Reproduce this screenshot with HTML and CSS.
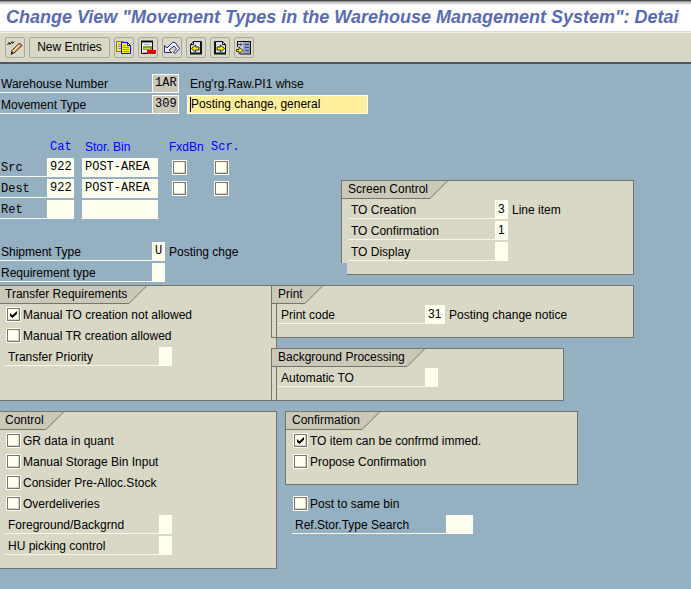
FILE: index.html
```html
<!DOCTYPE html>
<html lang="en">
<head>
<meta charset="utf-8">
<title>Change View "Movement Types in the Warehouse Management System"</title>
<link rel="stylesheet" href="styles.css">
</head>
<body>
<header>
  <h1 class="title">Change View "Movement Types in the Warehouse Management System": Detai</h1>
  <div class="toolbar" role="toolbar">
    <button class="tool" type="button" aria-label="Display/Change"><svg class="icon" viewBox="0 0 16 16">
      <path d="M.5 5l1.500-2.500L3 4.500 5 1.500l.5 2L7.500 1.500" fill="none" stroke="#222"/>
      <path d="M4.500 13.500l.5-3 7.500-7.500 2.500 2.500-8 7.500z" fill="#f9b868" stroke="#222"/>
      <path d="M6 11l6.500-6.500" stroke="#fff3d0"/><path d="M11.500 3l3 3" stroke="#c4553a"/><path d="M3.500 15l1-3.500 2 2z" fill="#111"/></svg></button>
    <button class="tool tool--text" type="button">New Entries</button>
    <button class="tool" type="button" aria-label="Copy as"><svg class="icon" viewBox="0 0 16 16">
      <path d="M.5 1.500h7v10h-7z" fill="#ffee2c" stroke="#827a30"/><path d="M2 4.500h3M2 6.500h3M2 8.500h3" stroke="#a39a3a"/>
      <path d="M5.500 2.500h6l3 3v8h-9z" fill="#ffee2c" stroke="#0000f0"/><path d="M11.500 2.500v3h3z" fill="#fff" stroke="#0000f0"/><path d="M7 5.500h3M7 7.500h6M7 9.500h6M7 11.500h6" stroke="#a39a3a"/></svg></button>
    <button class="tool" type="button" aria-label="Delete"><svg class="icon" viewBox="0 0 16 16">
      <path d="M1.500 1.500h11v12h-11z" fill="#eef2f8" stroke="#111"/><path d="M1 1.500h12" stroke="#111" stroke-width="2"/>
      <path d="M4 4.500h6M3 12.500h4" stroke="#9aa8bc"/><path d="M3 6h9v4H3z" fill="#7fa51c"/><path d="M4 8.500h6" stroke="#b9d260"/>
      <path d="M7 10h9v4H7z" fill="#e00010"/></svg></button>
    <button class="tool" type="button" aria-label="Undo"><svg class="icon" viewBox="0 0 16 16">
      <path d="M.5 5.500v7h7L5 10l5-4 2.500 3-3 3 1.500 1.500 4.500-5-4.500-6H8.500L3 8z" fill="#f2f4ff" stroke="#22228a"/></svg></button>
    <button class="tool" type="button" aria-label="Previous entry"><svg class="icon" viewBox="0 0 16 16">
      <path d="M5.500 1.500h8v12h-11v-9z" fill="#d3e3f5" stroke="#111"/><path d="M13 2v12M2 13.500h12" stroke="#111" stroke-width="2"/><path d="M5.500 1.500v3h-3z" fill="#fff" stroke="#111"/>
      <path d="M3.500 8.500l4-3.500v2h3.500v3H7.500v2z" fill="#ffee00" stroke="#333"/></svg></button>
    <button class="tool" type="button" aria-label="Next entry"><svg class="icon" viewBox="0 0 16 16">
      <path d="M2.500 1.500h8l3 3v9h-11z" fill="#d3e3f5" stroke="#111"/><path d="M3 2v12M2 13.500h12" stroke="#111" stroke-width="2"/><path d="M10.500 1.500v3h3z" fill="#fff" stroke="#111"/>
      <path d="M12.500 8.500l-4-3.500v2H5v3h3.500v2z" fill="#ffee00" stroke="#333"/></svg></button>
    <button class="tool" type="button" aria-label="Other entry"><svg class="icon" viewBox="0 0 16 16">
      <path d="M2 1.500h5v12H2z" fill="#d3dbe6"/><path d="M7 1.500h8v12H7z" fill="#8f9cc4"/><path d="M1 1.500h14M14.500 1v13M4 14h11M1.500 1v6" stroke="#111"/>
      <path d="M2 4.500h4M4 2.500l2 2-2 2M9 4.500h4M9 7.500h4M9 10.500h4" fill="none" stroke="#3f4660"/>
      <path d="M.5 9.500H3V7l4 3.500L3 14v-2.500H.5z" fill="#ffee00" stroke="#333"/></svg></button>
  </div>
</header>

<main>
  <section class="top">
    <div class="top__form">
      <div class="row"><label class="label" for="whse">Warehouse Number</label><input class="field field--3 field--key" id="whse" value="1AR" readonly><span class="name">Eng'rg.Raw.PI1 whse</span></div>
      <div class="row"><label class="label" for="mvt">Movement Type</label><input class="field field--3 field--key" id="mvt" value="309" readonly><span class="entry"><input class="field field--active" aria-label="Movement type description" value="Posting change, general"><i class="caret"></i></span></div>
      <table class="bins">
        <colgroup><col class="c-label"><col class="c-cat"><col class="c-bin"><col class="c-check"><col class="c-check"></colgroup>
        <thead><tr><td></td><th class="mono" scope="col">Cat</th><th scope="col">Stor. Bin</th><th class="flush" scope="col">FxdBn</th><th class="mono flush" scope="col">Scr.</th></tr></thead>
        <tbody>
          <tr><th class="mono" scope="row"><span class="label">Src</span></th><td><input class="field field--3" aria-label="Source category" value="922"></td><td><input class="field field--bin" aria-label="Source bin" value="POST-AREA"></td><td class="tick"><input class="box" type="checkbox" aria-label="Source fixed bin"></td><td class="tick"><input class="box" type="checkbox" aria-label="Source screen"></td></tr>
          <tr><th class="mono" scope="row"><span class="label">Dest</span></th><td><input class="field field--3" aria-label="Destination category" value="922"></td><td><input class="field field--bin" aria-label="Destination bin" value="POST-AREA"></td><td class="tick"><input class="box" type="checkbox" aria-label="Destination fixed bin"></td><td class="tick"><input class="box" type="checkbox" aria-label="Destination screen"></td></tr>
          <tr><th class="mono" scope="row"><span class="label">Ret</span></th><td><input class="field field--3" aria-label="Return category"></td><td><input class="field field--bin" aria-label="Return bin"></td><td></td><td></td></tr>
        </tbody>
      </table>
      <div class="row"><label class="label" for="ship">Shipment Type</label><input class="field field--1" id="ship" value="U"><span class="text">Posting chge</span></div>
      <div class="row"><label class="label" for="req">Requirement type</label><input class="field field--1" id="req"></div>
    </div>
    <section class="group group--notched">
      <h2 class="tab"><span class="tab__text">Screen Control</span><svg class="tab__edge" viewBox="0 0 18 18"><path d="M0 0H18L0 18z"/><path class="tab__line" d="M0 17.500L17.500 0"/></svg></h2>
      <div class="group__body">
        <div class="row"><label class="label" for="cre">TO Creation</label><input class="field field--1 field--num" id="cre" value="3"><span class="text">Line item</span></div>
        <div class="row"><label class="label" for="con">TO Confirmation</label><input class="field field--1 field--num" id="con" value="1"></div>
        <div class="row"><label class="label" for="dis">TO Display</label><input class="field field--1" id="dis"></div>
      </div>
    </section>
  </section>

  <div class="middle">
    <section class="group group--left">
      <h2 class="tab"><span class="tab__text">Transfer Requirements</span><svg class="tab__edge" viewBox="0 0 18 18"><path d="M0 0H18L0 18z"/><path class="tab__line" d="M0 17.500L17.500 0"/></svg></h2>
      <div class="group__body">
        <label class="row check"><input class="box" type="checkbox" checked>Manual TO creation not allowed</label>
        <label class="row check"><input class="box" type="checkbox">Manual TR creation allowed</label>
        <div class="row"><label class="label" for="prio">Transfer Priority</label><input class="field field--1" id="prio"></div>
      </div>
    </section>
    <div class="stack">
      <section class="group group--overlap">
        <h2 class="tab"><span class="tab__text">Print</span><svg class="tab__edge" viewBox="0 0 18 18"><path d="M0 0H18L0 18z"/><path class="tab__line" d="M0 17.500L17.500 0"/></svg></h2>
        <div class="group__body">
          <div class="row"><label class="label" for="print">Print code</label><input class="field field--2 field--num" id="print" value="31"><span class="text">Posting change notice</span></div>
        </div>
      </section>
      <section class="group group--overlap group--narrow">
        <h2 class="tab"><span class="tab__text">Background Processing</span><svg class="tab__edge" viewBox="0 0 18 18"><path d="M0 0H18L0 18z"/><path class="tab__line" d="M0 17.500L17.500 0"/></svg></h2>
        <div class="group__body">
          <div class="row"><label class="label" for="auto">Automatic TO</label><input class="field field--1" id="auto"></div>
        </div>
      </section>
    </div>
  </div>

  <div class="bottom">
    <section class="group group--left">
      <h2 class="tab"><span class="tab__text">Control</span><svg class="tab__edge" viewBox="0 0 18 18"><path d="M0 0H18L0 18z"/><path class="tab__line" d="M0 17.500L17.500 0"/></svg></h2>
      <div class="group__body">
        <label class="row check"><input class="box" type="checkbox">GR data in quant</label>
        <label class="row check"><input class="box" type="checkbox">Manual Storage Bin Input</label>
        <label class="row check"><input class="box" type="checkbox">Consider Pre-Alloc.Stock</label>
        <label class="row check"><input class="box" type="checkbox">Overdeliveries</label>
        <div class="row"><label class="label" for="fore">Foreground/Backgrnd</label><input class="field field--1" id="fore"></div>
        <div class="row"><label class="label" for="hu">HU picking control</label><input class="field field--1" id="hu"></div>
      </div>
    </section>
    <div>
      <section class="group group--narrow">
        <h2 class="tab"><span class="tab__text">Confirmation</span><svg class="tab__edge" viewBox="0 0 18 18"><path d="M0 0H18L0 18z"/><path class="tab__line" d="M0 17.500L17.500 0"/></svg></h2>
        <div class="group__body">
          <label class="row check"><input class="box" type="checkbox" checked>TO item can be confrmd immed.</label>
          <label class="row check"><input class="box" type="checkbox">Propose Confirmation</label>
        </div>
      </section>
      <div class="loose">
        <label class="row check"><input class="box" type="checkbox">Post to same bin</label>
        <div class="row"><label class="label" for="ref">Ref.Stor.Type Search</label><input class="field field--3" id="ref"></div>
      </div>
    </div>
  </div>
</main>
</body>
</html>
```
FILE: styles.css
```css
:root {
  --page: #95b0c1;
  --panel: #d9d8c6;
  --tab: #cbc8b9;
  --edge: #77746a;
  --field: #fffff0;
}
* { box-sizing: border-box; }
body {
  margin: 0;
  min-height: 100vh;
  background: var(--page);
  color: #000;
  font: 12px/21px "Liberation Sans", Arial, sans-serif;
  white-space: nowrap;
}
.title {
  margin: 0;
  height: 32px;
  padding: 4px 6px 0;
  border-bottom: 1px solid #dcdcdc;
  background: linear-gradient(#484446 0 1px, #9a9698 1px 2px, #c8c4c6 2px 3px, #e4e2e4 4px, #fff 5px);
  color: #5a6bae;
  font-size: 18px;
  font-style: italic;
  line-height: 26px;
}
.toolbar {
  display: flex;
  gap: 4px;
  height: 32px;
  padding: 4px 5px 0;
  border-top: 1px solid #f0f0e0;
  border-bottom: 2px solid #4c5a60;
  background: var(--panel);
}
.tool {
  display: flex;
  align-items: center;
  justify-content: center;
  width: 20px;
  height: 21px;
  padding: 0;
  border: 1px solid #aaa899;
  border-radius: 2px;
  background: none;
  color: #000;
  font: inherit;
}
.tool--text { width: 81px; }
.icon { width: 16px; height: 16px; flex: none; }

.top { display: flex; align-items: flex-end; padding: 10px 57px 1px 0; }
.top__form { flex: 0 0 341px; min-width: 0; width: 341px; }
.top__form > .row > .label { width: 152px; padding-left: 1px; }
.top .group { flex: 1; margin-bottom: 9px; }

.row { display: flex; height: 21px; }
.label { flex: none; width: 147px; height: 19px; padding-left: 3px; border-bottom: 1px solid #f7f6e8; }
.text { padding-left: 4px; }
.name { padding-left: 11px; }
.field {
  flex: none;
  height: 19px;
  padding: 0 0 0 3px;
  border: 0;
  border-radius: 0;
  background: var(--field);
  color: #000;
  font: 12px/19px "Liberation Mono", monospace;
  outline: 0;
}
.field--1 { width: 13px; }
.field--2 { width: 20px; }
.field--3 { width: 27px; }
.field--bin { width: 76px; }
.field--num { font-family: "Liberation Sans", Arial, sans-serif; }
.field--key { padding-left: 2px; border: 1px solid #fff; background: var(--tab); }
.entry { position: relative; margin-left: 8px; }
.field--active {
  display: block;
  width: 181px;
  border: 1px solid #fff;
  background: #ffef9c;
  font-family: "Liberation Sans", Arial, sans-serif;
}
.caret { position: absolute; left: 3px; top: 2px; width: 1px; height: 15px; background: #001050; }

.bins { table-layout: fixed; width: 253px; margin: 21px 0; border-collapse: collapse; }
.bins tr { height: 21px; }
.bins td, .bins th { height: 21px; padding: 0; font-weight: normal; text-align: left; vertical-align: top; }
.bins thead th { padding-left: 3px; color: #0000ff; }
.bins thead .flush { padding-left: 0; }
.bins .mono { font-family: "Liberation Mono", monospace; line-height: 20px; }
.bins .field { display: block; }
.bins .label { display: block; width: 47px; padding-left: 1px; }
.bins .tick { padding-left: 3px; }
.c-label { width: 47px; }
.c-cat { width: 35px; }
.c-bin { width: 87px; }
.c-check { width: 42px; }

.box {
  appearance: none;
  display: block;
  flex: none;
  width: 15px;
  height: 15px;
  margin: 2px 0 0;
  border: 1px solid #fff;
  background: var(--field);
  box-shadow: inset 0 0 0 1px #77746a, inset -2px -2px 0 #d4d4c4;
}
.box:checked::before {
  content: "";
  display: block;
  width: 7px;
  height: 7px;
  margin: 3px;
  background: #000;
  clip-path: polygon(0 30%, 35% 60%, 100% 0, 100% 40%, 35% 100%, 0 70%);
}
.check { gap: 2px; padding-left: 1px; }

.group { position: relative; border: 1px solid var(--edge); background: var(--panel); }
.tab { display: flex; margin: 0; height: 18px; font: inherit; line-height: 17px; }
.tab__text { padding: 0 2px 0 6px; border-bottom: 1px solid var(--edge); background: var(--tab); }
.tab__edge { width: 18px; height: 18px; fill: var(--tab); }
.tab__line { fill: none; stroke: var(--edge); }
.group__body { padding: 1px 0 11px 6px; }
.group--left { border-left: 0; }
.group--left .tab__text { padding-left: 5px; }
.group--left .group__body { padding-left: 5px; }
.group--left .label, .loose .label { width: 154px; }
.group--narrow { width: 293px; }
.group--overlap .group__body { margin-left: 4px; padding-left: 1px; border-left: 1px solid var(--edge); }
.group--notched::after {
  content: "";
  position: absolute;
  left: -1px;
  bottom: -1px;
  width: 6px;
  height: 12px;
  background: var(--page);
}

.middle { display: grid; grid-template-columns: 271px 1fr; padding-right: 57px; }
.middle .group--left { width: 277px; }
.stack { display: grid; gap: 10px; }
.bottom { display: grid; grid-template-columns: 277px 1fr; gap: 8px; align-items: start; margin-top: 10px; }
.loose { padding: 9px 0 0 7px; }
```
